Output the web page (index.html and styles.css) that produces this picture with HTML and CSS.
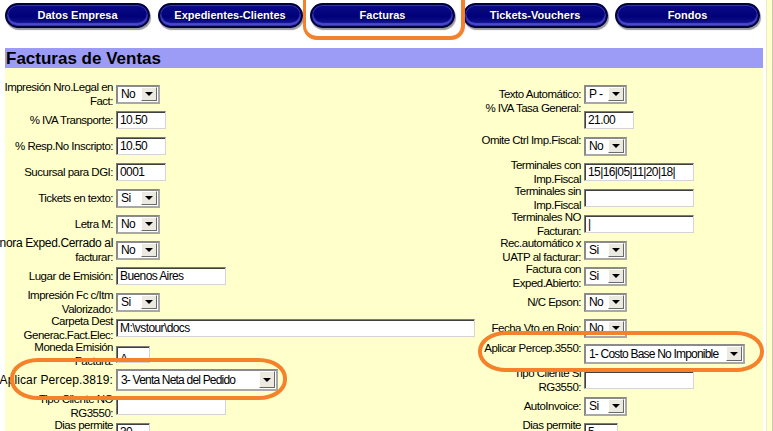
FILE: index.html
```html
<!DOCTYPE html>
<html lang="es">
<head>
<meta charset="utf-8">
<title>Facturas de Ventas</title>
<link rel="stylesheet" href="styles.css">
</head>
<body>
<div class="page">
  <div class="main">
    <nav class="tabs">
      <a class="tab" href="#">Datos Empresa</a>
      <a class="tab" href="#">Expedientes-Clientes</a>
      <a class="tab" href="#">Facturas</a>
      <a class="tab" href="#">Tickets-Vouchers</a>
      <a class="tab" href="#">Fondos</a>
    </nav>
    <h1 class="title">Facturas de Ventas</h1>
    <div class="form">
      <!-- row 1 -->
      <div class="lbl"><span>Impresión Nro.Legal en</span><span>Fact:</span></div>
      <div class="fld"><div class="sel w44"><span class="val">No</span><span class="arr"></span></div></div>
      <div class="lbl"><span>Texto Automático:</span></div>
      <div class="fld"><div class="sel w43"><span class="val">P -</span><span class="arr"></span></div></div>
      <!-- row 2 -->
      <div class="lbl"><span>% IVA Transporte:</span></div>
      <div class="fld"><div class="txt w50">10.50</div></div>
      <div class="lbl up"><span>% IVA Tasa General:</span></div>
      <div class="fld"><div class="txt w50">21.00</div></div>
      <!-- row 3 -->
      <div class="lbl"><span>% Resp.No Inscripto:</span></div>
      <div class="fld"><div class="txt w50">10.50</div></div>
      <div class="lbl top"><span>Omite Ctrl Imp.Fiscal:</span></div>
      <div class="fld"><div class="sel w43"><span class="val">No</span><span class="arr"></span></div></div>
      <!-- row 4 -->
      <div class="lbl"><span>Sucursal para DGI:</span></div>
      <div class="fld"><div class="txt w50">0001</div></div>
      <div class="lbl"><span>Terminales con</span><span>Imp.Fiscal</span></div>
      <div class="fld"><div class="txt w110">15|16|05|11|20|18|</div></div>
      <!-- row 5 -->
      <div class="lbl"><span>Tickets en texto:</span></div>
      <div class="fld"><div class="sel w44"><span class="val">Si</span><span class="arr"></span></div></div>
      <div class="lbl"><span>Terminales sin</span><span>Imp.Fiscal</span></div>
      <div class="fld"><div class="txt w110"></div></div>
      <!-- row 6 -->
      <div class="lbl"><span>Letra M:</span></div>
      <div class="fld"><div class="sel w44"><span class="val">No</span><span class="arr"></span></div></div>
      <div class="lbl"><span>Terminales NO</span><span>Facturan:</span></div>
      <div class="fld"><div class="txt w110">|</div></div>
      <!-- row 7 -->
      <div class="lbl"><span class="mid">Ignora Exped.Cerrado al</span><span>facturar:</span></div>
      <div class="fld"><div class="sel w44"><span class="val">No</span><span class="arr"></span></div></div>
      <div class="lbl"><span>Rec.automático x</span><span>UATP al facturar:</span></div>
      <div class="fld"><div class="sel w43"><span class="val">Si</span><span class="arr"></span></div></div>
      <!-- row 8 -->
      <div class="lbl"><span>Lugar de Emisión:</span></div>
      <div class="fld"><div class="txt w110">Buenos Aires</div></div>
      <div class="lbl"><span>Factura con</span><span>Exped.Abierto:</span></div>
      <div class="fld"><div class="sel w43"><span class="val">Si</span><span class="arr"></span></div></div>
      <!-- row 9 -->
      <div class="lbl"><span>Impresión Fc c/Itm</span><span>Valorizado:</span></div>
      <div class="fld"><div class="sel w44"><span class="val">Si</span><span class="arr"></span></div></div>
      <div class="lbl"><span>N/C Epson:</span></div>
      <div class="fld"><div class="sel w43"><span class="val">No</span><span class="arr"></span></div></div>
      <!-- row 10 -->
      <div class="lbl"><span>Carpeta Dest</span><span>Generac.Fact.Elec:</span></div>
      <div class="fld"><div class="txt w359">M:\vstour\docs</div></div>
      <div class="lbl"><span>Fecha Vto en Rojo:</span></div>
      <div class="fld"><div class="sel w43"><span class="val">No</span><span class="arr"></span></div></div>
      <!-- row 11 -->
      <div class="lbl"><span>Moneda Emisión</span><span>Factura:</span></div>
      <div class="fld"><div class="txt w34 clip"><span>A</span></div></div>
      <div class="lbl top"><span>Aplicar Percep.3550:</span></div>
      <div class="fld"><div class="sel big w161"><span class="val">1- Costo Base No Imponible</span><span class="arr"></span></div></div>
      <!-- row 12 -->
      <div class="lbl"><span class="wide">Aplicar Percep.3819:</span></div>
      <div class="fld"><div class="sel big tall w162"><span class="val">3- Venta Neta del Pedido</span><span class="arr"></span></div></div>
      <div class="lbl"><span>Tipo Cliente Si</span><span>RG3550:</span></div>
      <div class="fld"><div class="txt w110"></div></div>
      <!-- row 13 -->
      <div class="lbl"><span>Tipo Cliente NO</span><span>RG3550:</span></div>
      <div class="fld"><div class="txt w110"></div></div>
      <div class="lbl"><span>AutoInvoice:</span></div>
      <div class="fld"><div class="sel w43"><span class="val">Si</span><span class="arr"></span></div></div>
      <!-- row 14 -->
      <div class="lbl"><span>Dias permite</span><span>facturar:</span></div>
      <div class="fld"><div class="txt w34">30</div></div>
      <div class="lbl"><span>Dias permite</span><span>anular:</span></div>
      <div class="fld"><div class="txt w34">5</div></div>
    </div>
  </div>
  <div class="side"></div>

  <div class="mark mark-tab"></div>
  <div class="mark mark-left"></div>
  <div class="mark mark-right"></div>
</div>
</body>
</html>
```

FILE: styles.css
```css
html, body {
  margin: 0;
  padding: 0;
  background: #ffffff;
  font-family: "Liberation Sans", Arial, sans-serif;
}

.page {
  position: relative;
  display: flex;
  width: 773px;
  height: 431px;
  overflow: hidden;
}

.main {
  margin-left: 5px;
  width: 758px;
  display: flex;
  flex-direction: column;
}

.side {
  margin-left: 3px;
  flex: 1;
  background: #ffffcc;
  border-left: 1px solid #ececc8;
  border-right: 1px solid #c8c8b0;
}

/* ---------- tabs ---------- */
.tabs {
  flex-shrink: 0;
  display: flex;
  justify-content: space-between;
  width: 755px;
  height: 48px;
  box-sizing: border-box;
  padding-top: 3px;
}

.tab {
  box-sizing: border-box;
  width: 145px;
  height: 25px;
  padding-bottom: 1px;
  border-radius: 13px;
  display: flex;
  align-items: center;
  justify-content: center;
  color: #ffffff;
  font: bold 11px "Liberation Sans", Arial, sans-serif;
  text-decoration: none;
  text-shadow: 1px 1px 0 #000030;
  background: linear-gradient(#0c0c88 0%, #000078 55%, #1a1a98 100%);
  border: 2px solid #00003c;
  box-shadow:
    inset 0 0 0 1px #3434b4,
    inset 0 -2px 1px 1px #4a4ad0,
    1px 2px 1px #9a9a9a;
}

/* ---------- title ---------- */
.title {
  flex-shrink: 0;
  margin: 0;
  height: 20px;
  padding-left: 1px;
  background: #9c9cf6;
  color: #000000;
  font: bold 17px/21px "Liberation Sans", Arial, sans-serif;
}

/* ---------- form ---------- */
.form {
  flex: 1;
  min-height: 0;
  background: #ffffcc;
  box-sizing: border-box;
  padding-top: 13px;
  display: grid;
  grid-template-columns: 108px 360px 102px 1fr;
  grid-auto-rows: 26px;
  column-gap: 3px;
}

.lbl {
  display: flex;
  flex-direction: column;
  align-items: flex-end;
  justify-content: center;
  white-space: nowrap;
  font: 11.5px/14px "Liberation Sans", Arial, sans-serif;
  letter-spacing: -0.5px;
  color: #000000;
}

.lbl .wide {
  font-size: 12px;
  letter-spacing: 0.1px;
}

.lbl .mid {
  font-size: 12px;
  letter-spacing: -0.35px;
}

.lbl.top {
  justify-content: flex-start;
}

.lbl.up {
  justify-content: flex-start;
  margin-top: -6px;
}

.fld {
  display: flex;
  align-items: center;
}

.txt {
  box-sizing: border-box;
  height: 18px;
  background: #ffffff;
  border: 1px solid;
  border-color: #7a7a7a #d4d4d4 #d4d4d4 #7a7a7a;
  box-shadow: inset 1px 1px 0 #404040;
  padding: 1px 0 0 3px;
  font: 12px/15px "Liberation Sans", Arial, sans-serif;
  letter-spacing: -0.6px;
  color: #000000;
  overflow: hidden;
  white-space: nowrap;
}

.txt.clip {
  height: 17px;
  padding-top: 5px;
}

.sel {
  box-sizing: border-box;
  height: 19px;
  display: flex;
  align-items: stretch;
  background: #ffffff;
  border: 2px solid;
  border-color: #8a8a8a #a8a8a8 #a8a8a8 #8a8a8a;
  font: 12px/15px "Liberation Sans", Arial, sans-serif;
  letter-spacing: -0.6px;
  color: #000000;
}

.sel.big {
  height: 20px;
  letter-spacing: -0.8px;
}

.sel.tall {
  height: 22px;
}

.sel .val {
  flex: 1;
  display: flex;
  align-items: center;
  padding-left: 3px;
  white-space: nowrap;
  overflow: hidden;
}

.sel .arr {
  box-sizing: border-box;
  width: 16px;
  margin: 0 1px 1px 0;
  background: #ece9e0;
  border: 1px solid;
  border-color: #ffffff #6a6a6a #6a6a6a #ffffff;
  display: flex;
  align-items: center;
  justify-content: center;
}

.sel .arr::after {
  content: "";
  border-top: 4px solid #000000;
  border-left: 4px solid transparent;
  border-right: 4px solid transparent;
  margin-top: 1px;
}

.w34 { width: 34px; }
.w43 { width: 43px; }
.w44 { width: 44px; }
.w50 { width: 50px; }
.w110 { width: 110px; }
.w161 { width: 161px; }
.w162 { width: 162px; }
.w359 { width: 359px; }

/* ---------- annotation marks (drawn over the page) ---------- */
.mark {
  position: absolute;
  box-sizing: border-box;
  border: 4px solid #f5812a;
  pointer-events: none;
}

.mark-tab {
  left: 303px;
  top: -20px;
  width: 162px;
  height: 60px;
  border-width: 3px 4px 4px 3px;
  border-radius: 14px;
}

.mark-left {
  left: 10px;
  top: 358px;
  width: 277px;
  height: 42px;
  border-radius: 28px / 20px;
}

.mark-right {
  left: 478px;
  top: 331px;
  width: 286px;
  height: 41px;
  border-radius: 28px / 20px;
}
```
